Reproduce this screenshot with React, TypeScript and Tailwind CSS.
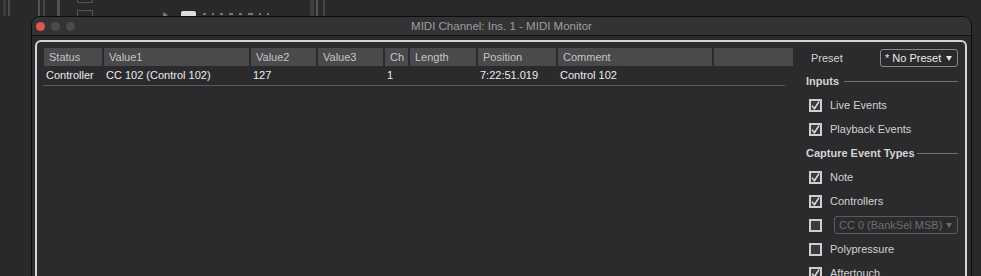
import React from "react";

const cols = [
  { name: "Status", w: 58 },
  { name: "Value1", w: 145 },
  { name: "Value2", w: 65 },
  { name: "Value3", w: 65 },
  { name: "Ch", w: 23 },
  { name: "Length", w: 66 },
  { name: "Position", w: 78 },
  { name: "Comment", w: 154 },
  { name: "", w: 79 },
];

const row = ["Controller", "CC 102 (Control 102)", "127", "", "1", "", "7:22:51.019", "Control 102", ""];

function Check({ checked }: { checked: boolean }) {
  return (
    <div className="w-[13px] h-[13px] border-2 border-[#cfcfcf] bg-[#3a3a3c] flex items-center justify-center shrink-0">
      {checked && (
        <svg width="9" height="9" viewBox="0 0 9 9">
          <path d="M1 4.6 L3.4 7.6 L8 0.6" stroke="#e4e4e4" strokeWidth="1.5" fill="none" />
        </svg>
      )}
    </div>
  );
}

function CheckRow({ checked, label }: { checked: boolean; label: string }) {
  return (
    <div className="h-[24px] flex items-center pl-[3px] gap-[8px] shrink-0">
      <Check checked={checked} />
      <span className="text-[#d2d2d2]">{label}</span>
    </div>
  );
}

function Section({ title, lineW }: { title: string; lineW: number }) {
  return (
    <div className="h-[24px] flex items-center shrink-0">
      <span className="font-bold text-[#d4d4d4]">{title}</span>
      <div className="h-px bg-[#6e6e70] ml-auto" style={{ width: lineW }} />
    </div>
  );
}

export default function App() {
  return (
    <div className="relative w-[981px] h-[276px] overflow-hidden bg-[#29292b] font-['Liberation_Sans',Arial,sans-serif] text-[11px]">
      {/* background app */}
      <div className="absolute left-[3px] top-0 w-[3px] h-[16px] bg-[#3c3c3e]" />
      <div className="absolute left-[8px] top-0 w-[2px] h-[16px] bg-[#4a4a4c]" />
      <div className="absolute left-[38px] top-0 w-[2px] h-[16px] bg-[#555557]" />
      <div className="absolute left-[43px] top-0 w-[2px] h-[16px] bg-[#444446]" />
      <div className="absolute left-[57px] top-0 w-[3px] h-[16px] bg-[#505052]" />
      <div className="absolute left-[77px] top-[-6px] w-[16px] h-[9px] border border-[#555]" />
      <div className="absolute left-[77px] top-[10px] w-[16px] h-[10px] border border-[#555]" />
      <div className="absolute left-[163px] top-[12px] w-0 h-0 border-l-[5px] border-l-[#777] border-y-[3px] border-y-transparent" />
      <div className="absolute left-[181px] top-[11px] w-[15px] h-[5px] bg-[#ddd] rounded-t-[2px]" />
      <div className="absolute left-[203px] top-[13px] flex gap-[6px]">
        {[3, 2, 3, 4, 3, 5, 2, 2].map((w, i) => (
          <div key={i} className="h-[2px] bg-[#777]" style={{ width: w }} />
        ))}
      </div>
      <div className="absolute left-[310px] top-0 w-[4px] h-[16px] bg-[#3f3f41]" />
      <div className="absolute left-[316px] top-0 w-[2px] h-[16px] bg-[#555557]" />
      <div className="absolute left-[323px] top-0 w-[2px] h-[16px] bg-[#454547]" />

      {/* window */}
      <div className="absolute left-[31px] top-[16px] w-[941px] h-[300px] border border-[#0c0c0c] rounded-t-[9px] bg-[#2b2b2d] flex flex-col">
        <div className="relative h-[19px] bg-[#333335] rounded-t-[8px] border-b border-[#111] flex items-center justify-center shrink-0 pt-[2px]">
          <div className="absolute left-[4px] top-[5px] flex gap-[6px]">
            <div className="w-[9px] h-[9px] rounded-full bg-[#e0574c]" />
            <div className="w-[9px] h-[9px] rounded-full bg-[#4b4b4d]" />
            <div className="w-[9px] h-[9px] rounded-full bg-[#4b4b4d]" />
          </div>
          <span className="text-[11.5px] text-[#9e9e9e]">MIDI Channel: Ins. 1 - MIDI Monitor</span>
        </div>
        <div className="flex-1 pt-[4px] pl-[3px] pr-[4px]">
          <div className="h-full border-2 border-b-0 border-[#d4d4d4] rounded-t-[6px] flex pt-[6px] pl-[7px]">
            {/* table */}
            <div className="w-[749px] shrink-0">
              <div className="flex gap-[2px] h-[18px]">
                {cols.map((c, i) => (
                  <div key={i} className="bg-[#4a4a4c] flex items-center pl-[5px] text-[#c4c4c4] shrink-0" style={{ width: c.w }}>
                    {c.name}
                  </div>
                ))}
              </div>
              <div className="w-[742px] -ml-px h-[20px] border-b border-[#59595b]">
                <div className="flex gap-[2px] h-[19px] ml-px">
                  {cols.map((c, i) => (
                    <div key={i} className="flex items-center pl-[2px] text-[#ececec] whitespace-nowrap shrink-0" style={{ width: c.w }}>
                      {row[i]}
                    </div>
                  ))}
                </div>
              </div>
            </div>
            {/* right panel */}
            <div className="ml-[13px] w-[152px] flex flex-col pt-[1px]">
              <div className="h-[18px] flex items-center shrink-0">
                <span className="ml-[5px] text-[#d2d2d2]">Preset</span>
                <div className="ml-auto w-[78px] h-[18px] border border-[#8a8a8c] rounded-[3px] flex items-center pl-[4px] pr-[5px] text-[#ececec]">
                  <span>* No Preset</span>
                  <span className="ml-auto w-0 h-0 border-x-[3px] border-x-transparent border-t-[5px] border-t-[#e8e8e8]" />
                </div>
              </div>
              <div className="h-[2px] shrink-0" />
              <Section title="Inputs" lineW={114} />
              <CheckRow checked label="Live Events" />
              <CheckRow checked label="Playback Events" />
              <Section title="Capture Event Types" lineW={41} />
              <CheckRow checked label="Note" />
              <CheckRow checked label="Controllers" />
              <div className="h-[24px] flex items-center pl-[3px] gap-[12px] shrink-0">
                <Check checked={false} />
                <div className="flex-1 h-[18px] border border-[#5c5c5e] rounded-[3px] flex items-center pl-[4px] pr-[5px] text-[#6c6c6e]">
                  <span>CC 0 (BankSel MSB)</span>
                  <span className="ml-auto w-0 h-0 border-x-[3px] border-x-transparent border-t-[5px] border-t-[#6c6c6e]" />
                </div>
              </div>
              <CheckRow checked={false} label="Polypressure" />
              <CheckRow checked label="Aftertouch" />
            </div>
          </div>
        </div>
      </div>
    </div>
  );
}
